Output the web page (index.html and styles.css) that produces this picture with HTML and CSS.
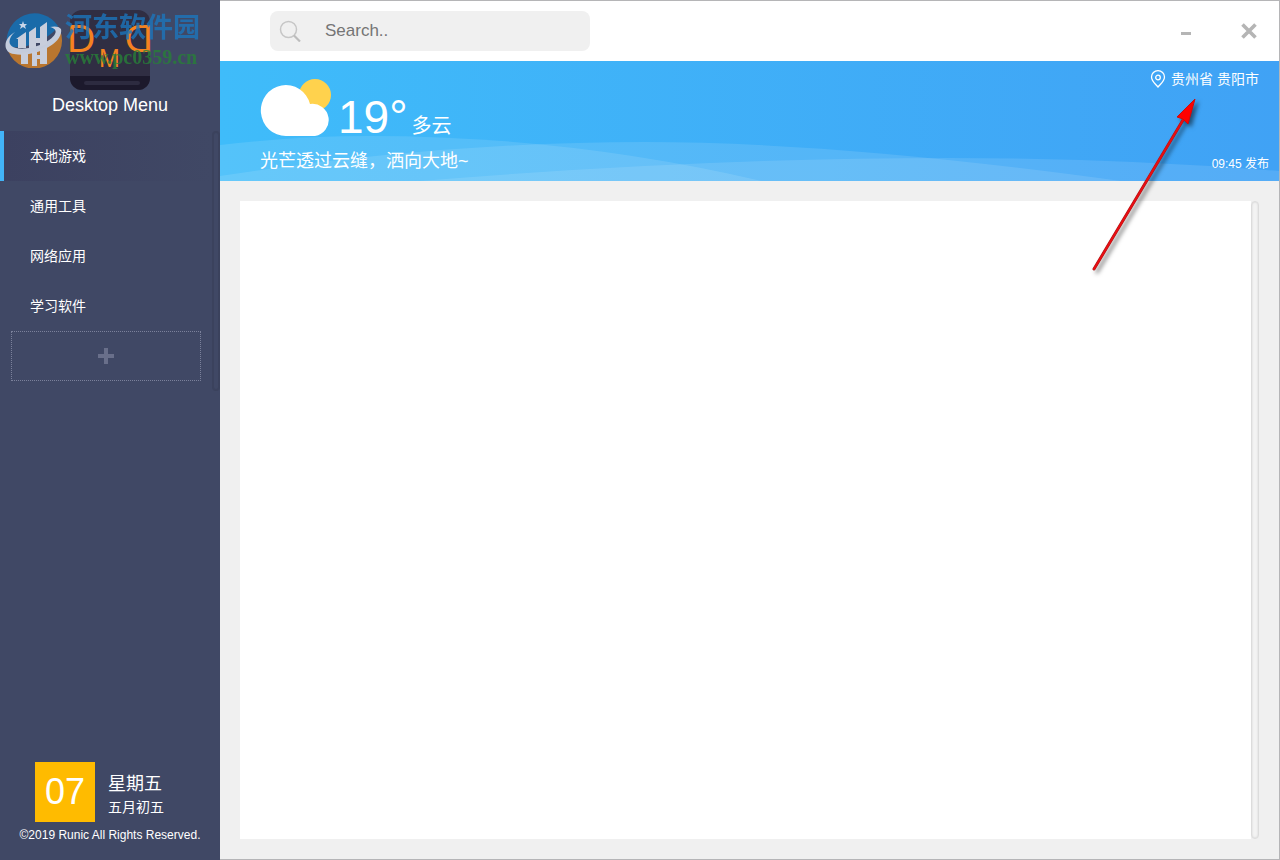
FILE: index.html
```html
<!DOCTYPE html>
<html lang="zh-CN">
<head>
<meta charset="utf-8">
<meta name="viewport" content="width=device-width, initial-scale=1">
<title>Desktop Menu</title>
<link rel="stylesheet" href="styles.css">
</head>
<body>
<div class="window">
  <aside class="sidebar">
    <header class="brand">
      <svg class="brand-logo" viewBox="0 0 80 80" aria-hidden="true">
        <rect width="80" height="80" rx="12" fill="#302e43"/>
        <path d="M0 66H80V68A12 12 0 0 1 68 80H12A12 12 0 0 1 0 68Z" fill="#1c192c"/>
        <rect x="14" y="71" width="56" height="4" rx="2" fill="#2d2b40"/>
        <g class="logo-letters">
          <text class="logo-d" x="-3" y="42">D</text>
          <text class="logo-m" x="29" y="57">M</text>
          <text class="logo-d" x="-83" y="42" transform="scale(-1 1)">D</text>
        </g>
      </svg>
      <h1 class="brand-name">Desktop Menu</h1>
    </header>
    <div class="menu">
      <nav class="menu-list">
        <a class="menu-item is-active" href="#local">本地游戏</a>
        <a class="menu-item" href="#tools">通用工具</a>
        <a class="menu-item" href="#network">网络应用</a>
        <a class="menu-item" href="#study">学习软件</a>
        <button class="menu-add" type="button" aria-label="Add">
          <svg viewBox="0 0 16 16" width="16" height="16"><path d="M8 0V16M0 8H16" stroke="#696f8a" stroke-width="4"/></svg>
        </button>
      </nav>
      <div class="menu-scroll"></div>
    </div>
    <footer class="today">
      <div class="date">
        <div class="date-day">07</div>
        <div class="date-text">
          <div class="date-week">星期五</div>
          <div class="date-lunar">五月初五</div>
        </div>
      </div>
      <p class="copyright">©2019 Runic All Rights Reserved.</p>
    </footer>
  </aside>

  <main class="main">
    <div class="topbar">
      <label class="search">
        <svg class="search-icon" viewBox="0 0 22 22" aria-hidden="true"><circle cx="9.500" cy="9.500" r="8" fill="none" stroke="#c6c6c6" stroke-width="1.500"/><path d="M15 15.500L21 21.500" stroke="#bdbdbd" stroke-width="2.200"/></svg>
        <input class="search-input" type="text" placeholder="Search.." aria-label="Search">
      </label>
      <div class="window-buttons">
        <button class="window-button" type="button" aria-label="Minimize"><svg viewBox="0 0 16 16" width="16" height="16"><path d="M3 10.500H13" stroke="#b5b5b5" stroke-width="3"/></svg></button>
        <button class="window-button" type="button" aria-label="Close"><svg viewBox="0 0 16 16" width="16" height="16"><path d="M1.500 1.500L14.500 14.500M14.500 1.500L1.500 14.500" stroke="#b5b5b5" stroke-width="3.600"/></svg></button>
      </div>
    </div>

    <section class="weather">
      <svg class="waves" viewBox="0 0 1060 120" preserveAspectRatio="none" aria-hidden="true">
        <path d="M0 84Q75 75 150 75Q350 75 542 120H0Z"/>
        <path d="M0 115Q220 81 425 81Q620 81 902 120H0Z"/>
        <path d="M200 120Q480 97 730 97Q900 97 1060 110V120Z"/>
      </svg>
      <div class="weather-now">
        <div class="weather-row">
          <svg class="weather-icon" viewBox="0 0 72 58" aria-hidden="true">
            <circle cx="55" cy="16" r="16" fill="#ffd24d"/>
            <path d="M26 57A25 25.500 0 1 1 50 25A16 16 0 1 1 55 57Z" fill="#fff"/>
          </svg>
          <span class="weather-temp">19°</span>
          <span class="weather-kind">多云</span>
        </div>
        <p class="weather-note">光芒透过云缝，洒向大地~</p>
      </div>
      <div class="weather-side">
        <div class="place">
          <svg class="place-icon" viewBox="0 0 16 18" fill="none" stroke="#fff" aria-hidden="true"><path d="M8 17C5 13.500 1.500 11 1.500 7A6.500 6.300 0 0 1 14.500 7C14.500 11 11 13.500 8 17Z" stroke-width="1.300"/><circle cx="8" cy="7.500" r="2.300" stroke-width="1.300"/></svg>
          <span>贵州省 贵阳市</span>
        </div>
        <div class="published">09:45 发布</div>
      </div>
    </section>

    <section class="content">
      <div class="content-pane"></div>
      <div class="content-scroll"></div>
    </section>
  </main>

  <svg class="pointer" viewBox="0 0 120 190" aria-hidden="true">
    <path d="M14 179L103 30" stroke="#a81818" stroke-width="3" stroke-linecap="round"/>
    <path d="M14 179L103 30" stroke="#e80d12" stroke-width="2" stroke-linecap="round"/>
    <path d="M115 9L97 27L103 29L108 34Z" fill="#f00" stroke="#d00a0a"/>
  </svg>

  <div class="watermark">
    <svg class="watermark-mark" viewBox="0 0 58 58" aria-hidden="true">
      <path d="M2 36A28 28 0 0 1 53 16C47 27 20 42 2 36Z" fill="#1a6ba9"/>
      <path d="M3 41C22 46 45 34 55 20A28 28 0 0 1 3 41Z" fill="#b9762f"/>
      <path d="M10 22C-3 29 -2 43 9 44C28 48 59 34 56 19C54 16 49 16 45 17C49 18 52 20 50 24C45 33 24 41 11 38C2 36 3 28 10 22Z" fill="#c4ccdc"/>
      <path d="M11 29L21 22V38H13V29ZM24 22L31 17V38H24ZM35 17L42 12V34L35 37ZM27 28H39V33H27Z" fill="#c8cedc"/>
      <path d="M16 43L23 42V54H16ZM27 42L32 41V56H27ZM35 39L42 36V54H35ZM29 45H39V49H29Z" fill="#c8cedc"/>
      <path d="M18 11L19 14L22 14L20 16L21 19L18 17L15 19L16 16L14 14L17 14Z" fill="#c8d5e8"/>
    </svg>
    <div class="watermark-text">
      <div class="watermark-name">河东软件园</div>
      <div class="watermark-site">www.pc0359.cn</div>
    </div>
  </div>
</div>
</body>
</html>
```

FILE: styles.css
```css
* {
  box-sizing: border-box;
}

body {
  margin: 0;
  font-family: "Liberation Sans", "Noto Sans CJK SC", sans-serif;
  font-size: 14px;
  color: #fff;
}

h1,
p {
  margin: 0;
  font-weight: 400;
}

button {
  padding: 0;
  border: 0;
  background: none;
  cursor: pointer;
}

svg {
  display: block;
}

.window {
  position: relative;
  display: grid;
  grid-template-columns: 220px 1fr;
  min-height: 100vh;
}

/* Sidebar */
.sidebar {
  display: flex;
  flex-direction: column;
  background: #404865;
}

.brand {
  display: flex;
  flex-direction: column;
  align-items: center;
  gap: 3px;
  height: 131px;
  padding-top: 10px;
}

.brand-logo {
  width: 80px;
  height: 80px;
  overflow: visible;
}

.logo-letters {
  fill: #f58220;
  font-family: "Liberation Sans", sans-serif;
}

.logo-d {
  font-size: 39px;
}

.logo-m {
  font-size: 25px;
}

.brand-name {
  font-size: 18px;
  line-height: 24px;
}

.menu {
  display: flex;
}

.menu-list {
  flex: 1;
  display: flex;
  flex-direction: column;
}

.menu-item {
  height: 50px;
  padding-left: 30px;
  line-height: 50px;
  color: #fff;
  text-decoration: none;
}

.menu-item.is-active {
  padding-left: 26px;
  border-left: 4px solid #42b4f8;
  background: linear-gradient(90deg, #3c4160, #404865);
}

.menu-add {
  display: grid;
  place-items: center;
  height: 50px;
  margin: 0 11px 10px;
  border: 1px dotted #7b819b;
}

.menu-scroll {
  width: 8px;
  border: 2px solid #3b425d;
  border-radius: 4px;
}

.today {
  display: flex;
  flex-direction: column;
  align-items: center;
  gap: 5px;
  margin-top: auto;
  padding-bottom: 16px;
}

.date {
  display: flex;
  gap: 13px;
  width: 150px;
}

.date-day {
  width: 60px;
  height: 60px;
  background: #fb0;
  font-size: 36px;
  line-height: 60px;
  text-align: center;
}

.date-text {
  padding-top: 10px;
}

.date-week {
  font-size: 18px;
  line-height: 24px;
}

.date-lunar {
  line-height: 22px;
}

.copyright {
  font-size: 12px;
  line-height: 17px;
}

/* Main area */
.main {
  display: flex;
  flex-direction: column;
  border: 1px solid #b5b5b7;
  border-left: 0;
  background: #f0f0f0;
}

.topbar {
  display: flex;
  align-items: center;
  justify-content: space-between;
  height: 60px;
  padding: 0 22px 0 50px;
  background: #fff;
}

.search {
  display: flex;
  align-items: center;
  width: 320px;
  height: 40px;
  padding: 0 9px;
  border-radius: 8px;
  background: #f0f0f0;
}

.search-icon {
  width: 22px;
  height: 22px;
}

.search-input {
  flex: 1;
  min-width: 0;
  padding: 0 0 0 24px;
  border: 0;
  outline: 0;
  background: none;
  color: #757575;
  font: 17px "Liberation Sans", sans-serif;
}

.search-input::placeholder {
  color: #757575;
}

.window-buttons {
  display: flex;
  gap: 47px;
}

/* Weather banner */
.weather {
  position: relative;
  display: flex;
  justify-content: space-between;
  height: 120px;
  background: linear-gradient(90deg, #3fbcfa, #40a2f5);
}

.waves {
  position: absolute;
  inset: 0;
  width: 100%;
  height: 100%;
  fill: rgba(255, 255, 255, 0.11);
}

.weather-now,
.weather-side {
  position: relative;
}

.weather-now {
  padding: 18px 0 0 40px;
}

.weather-row {
  display: flex;
  align-items: baseline;
  height: 70px;
}

.weather-icon {
  width: 72px;
  height: 58px;
  margin-right: 6px;
  align-self: flex-start;
}

.weather-temp {
  margin-right: 4px;
  font-size: 46px;
  line-height: 76px;
}

.weather-kind {
  font-size: 20px;
}

.weather-note {
  font-size: 18px;
  line-height: 24px;
}

.weather-side {
  display: flex;
  flex-direction: column;
  justify-content: space-between;
  align-items: flex-end;
  padding: 8px 10px;
}

.place {
  display: flex;
  gap: 5px;
  padding-right: 10px;
  line-height: 20px;
}

.place-icon {
  width: 16px;
  height: 18px;
  margin-top: 1px;
}

.published {
  font-size: 12px;
  line-height: 18px;
}

/* Content */
.content {
  flex: 1;
  display: flex;
  padding: 20px;
}

.content-pane {
  flex: 1;
  background: #fff;
}

.content-scroll {
  width: 8px;
  border: 1px solid #dcdcdc;
  border-radius: 4px;
  background: #f3f3f3;
  box-shadow: inset 0 0 2px #ccc;
}

/* Overlays */
.pointer {
  position: absolute;
  top: 90px;
  right: 80px;
  width: 120px;
  height: 190px;
  fill: none;
  filter: drop-shadow(3px 3px 2px rgba(0, 0, 0, 0.5));
  pointer-events: none;
}

.watermark {
  position: absolute;
  top: 10px;
  left: 5px;
  display: flex;
  gap: 2px;
  pointer-events: none;
}

.watermark-mark {
  width: 58px;
  height: 58px;
}

.watermark-name {
  color: #1c75bc;
  font-size: 27px;
  font-weight: 700;
  line-height: 36px;
  opacity: 0.8;
}

.watermark-site {
  color: #288038;
  font: 700 20px/22px "Liberation Serif", serif;
  opacity: 0.8;
}
```
